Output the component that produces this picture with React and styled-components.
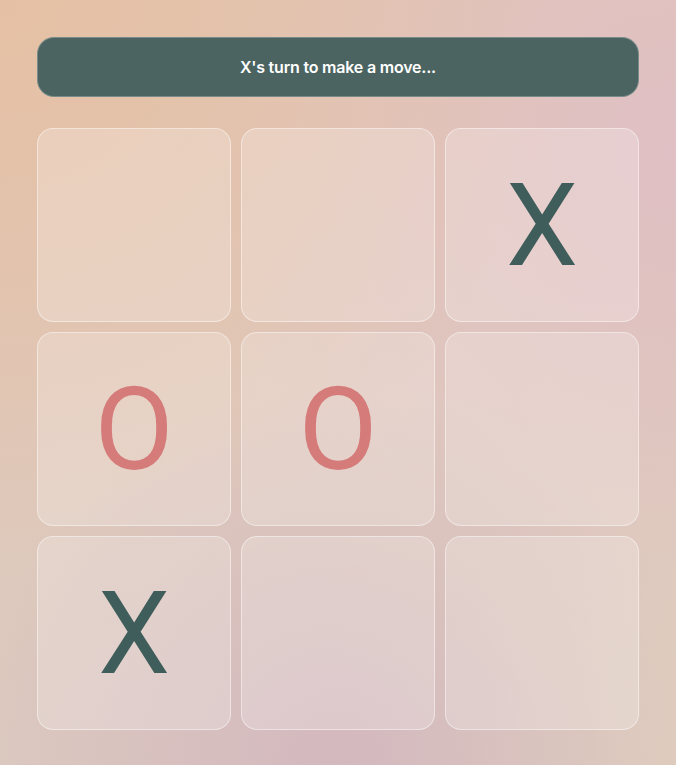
import React, { useState } from 'react'
import styled, { createGlobalStyle } from 'styled-components'

const GlobalStyle = createGlobalStyle`
  * { box-sizing: border-box; }
  html, body { margin: 0; padding: 0; }
  body {
    font-family: 'Inter', 'Roboto', sans-serif;
    background: #dfc6bc;
  }
`

const Page = styled.div`
  width: 676px;
  height: 765px;
  padding: 37px 37px 35px;
  display: flex;
  flex-direction: column;
  gap: 31px;
  background:
    radial-gradient(circle at 50% 100%, rgba(210, 182, 190, 0.9) 0%, rgba(210, 182, 190, 0) 45%),
    radial-gradient(circle at 0% 0%, rgba(229, 192, 164, 1) 0%, rgba(229, 192, 164, 0) 55%),
    radial-gradient(circle at 100% 20%, rgba(224, 192, 196, 1) 0%, rgba(224, 192, 196, 0) 55%),
    radial-gradient(circle at 100% 100%, rgba(224, 206, 190, 1) 0%, rgba(224, 206, 190, 0) 50%),
    linear-gradient(180deg, #e2c6b6 0%, #dccabf 100%);
`

const Status = styled.div`
  height: 60px;
  border-radius: 17px;
  background: #4b6461;
  border: 1px solid rgba(255, 255, 255, 0.25);
  display: flex;
  align-items: center;
  justify-content: center;
  color: #ffffff;
  font-size: 16px;
  font-weight: 600;
  letter-spacing: -0.2px;
`

const Board = styled.div`
  display: grid;
  grid-template-columns: repeat(3, 194px);
  grid-template-rows: repeat(3, 194px);
  gap: 10px 10px;
`

const Cell = styled.button`
  border-radius: 16px;
  background: rgba(255, 255, 255, 0.22);
  border: 1px solid rgba(255, 255, 255, 0.45);
  display: flex;
  align-items: center;
  justify-content: center;
  padding: 0;
  cursor: pointer;
  font-family: 'Roboto', 'Liberation Sans', sans-serif;
  font-size: 115px;
  font-weight: 400;
  line-height: 1;
  color: ${p => (p.$mark === 'O' ? '#d57b79' : '#3f5d5a')};
`

const start = [null, null, 'X', 'O', 'O', null, 'X', null, null]

export default function App() {
  const [cells] = useState(start)

  return (
    <>
      <GlobalStyle />
      <Page>
        <Status>X's turn to make a move...</Status>
        <Board>
          {cells.map((c, i) => (
            <Cell key={i} $mark={c}>{c}</Cell>
          ))}
        </Board>
      </Page>
    </>
  )
}
